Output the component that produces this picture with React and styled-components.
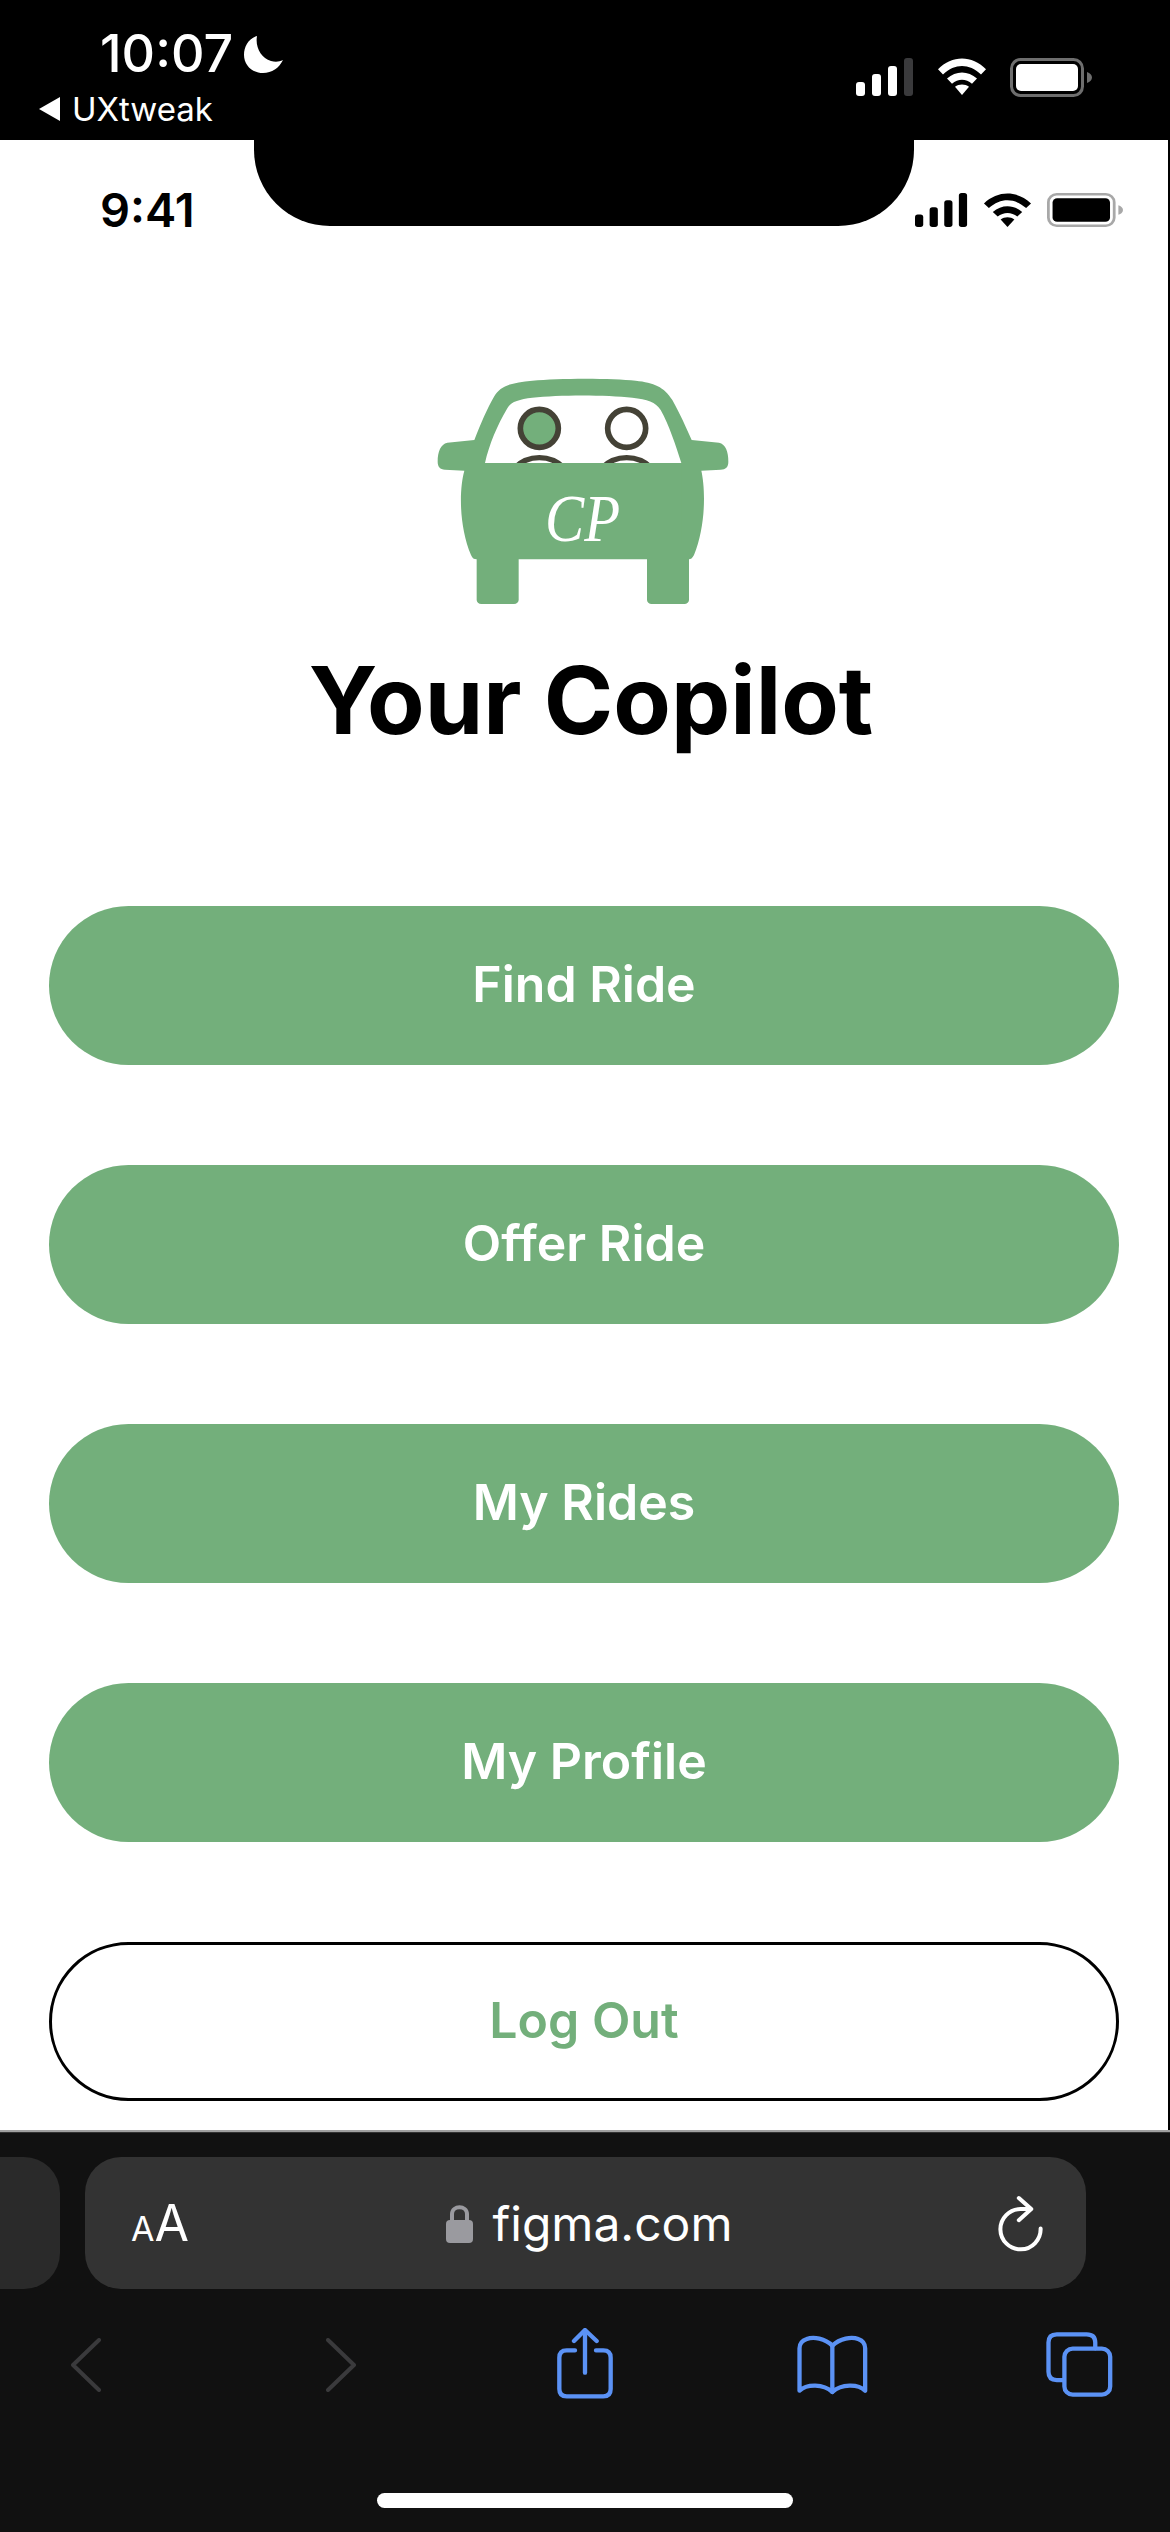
import React from 'react';
import styled, { createGlobalStyle } from 'styled-components';

const GlobalStyle = createGlobalStyle`
    html, body {
        margin: 0;
        padding: 0;
        background: #000;
    }
`;

const Page = styled.div`
    width: 1170px;
    height: 2532px;
    display: flex;
    flex-direction: column;
    overflow: hidden;
    font-family: Inter, "Liberation Sans", sans-serif;
`;

const TopBar = styled.div`
    height: 140px;
    flex: none;
    background: #000;
    color: #fff;
    display: flex;
    justify-content: space-between;
    box-sizing: border-box;
    padding: 28px 78px 0 38px;
`;

const TopLeft = styled.div`
    display: flex;
    flex-direction: column;
`;

const ClockRow = styled.div`
    display: flex;
    align-items: center;
    gap: 11px;
    padding-left: 62px;
    height: 52px;
    font-size: 52px;
    line-height: 52px;
    font-weight: 500;
`;

const BackLink = styled.div`
    display: flex;
    align-items: center;
    gap: 10px;
    height: 40px;
    margin-top: 9px;
    font-size: 33px;
    font-weight: 400;
`;

const TopIcons = styled.div`
    display: flex;
    align-items: flex-start;
    gap: 23px;
    padding-top: 30px;
`;

const Screen = styled.div`
    position: relative;
    flex: none;
    width: 1168px;
    height: 1990px;
    background: #fff;
    display: flex;
    flex-direction: column;
    align-items: center;
`;

const Notch = styled.div`
    position: absolute;
    top: 0;
    left: 254px;
    width: 660px;
    height: 86px;
    background: #000;
    border-radius: 0 0 76px 76px;
`;

const PhoneStatus = styled.div`
    align-self: stretch;
    height: 100px;
    box-sizing: border-box;
    padding: 53px 45px 0 100px;
    display: flex;
    justify-content: space-between;
    align-items: flex-start;
    color: #000;
`;

const PhoneClock = styled.div`
    font-size: 47px;
    line-height: 52px;
    font-weight: 600;
    margin-top: -9px;
`;

const PhoneIcons = styled.div`
    display: flex;
    gap: 15px;
`;

const LogoWrap = styled.div`
    margin-top: 110px;
    height: 270px;
    width: 370px;
`;

const Title = styled.h1`
    margin: 24px 0 0 14px;
    font-size: 94px;
    line-height: 112px;
    font-weight: 700;
    color: #000;
`;

const Buttons = styled.div`
    margin-top: 150px;
    display: flex;
    flex-direction: column;
    gap: 100px;
`;

const MenuButton = styled.button`
    width: 1070px;
    height: 159px;
    box-sizing: border-box;
    margin: 0;
    padding: 0 0 3px;
    border-radius: 80px;
    border: ${props => (props.$outline ? '3px solid #000' : 'none')};
    background: ${props => (props.$outline ? '#fff' : '#73af7b')};
    color: ${props => (props.$outline ? '#73af7b' : '#fff')};
    font-family: inherit;
    font-size: 50px;
    font-weight: 600;
`;

const Chrome = styled.div`
    flex: 1;
    background: #111;
    border-top: 2px solid #a0a0a0;
    box-shadow: inset 0 1px 0 #333;
    box-sizing: border-box;
    padding-top: 25px;
    display: flex;
    flex-direction: column;
`;

const UrlRow = styled.div`
    display: flex;
    gap: 25px;
    height: 132px;
`;

const PrevTab = styled.div`
    width: 60px;
    background: #2a2a2a;
    border-radius: 0 36px 36px 0;
`;

const UrlBar = styled.div`
    width: 1001px;
    background: #333;
    border-radius: 36px;
    display: flex;
    align-items: center;
    justify-content: space-between;
    box-sizing: border-box;
    padding: 0 42px 0 46px;
    color: #fff;
`;

const TextSize = styled.div`
    font-size: 34px;
    font-weight: 400;

    span {
        font-size: 50px;
    }
`;

const Address = styled.div`
    display: flex;
    align-items: center;
    gap: 20px;
    margin-right: 8px;
    font-size: 48px;
    font-weight: 400;
`;

const Toolbar = styled.div`
    display: grid;
    grid-template-columns: 255px 229px 240px 250px auto;
    align-items: center;
    height: 72px;
    margin-top: 39px;
    padding-left: 71px;
`;

const HomeBar = styled.div`
    margin: 93px auto 0;
    width: 416px;
    height: 15px;
    border-radius: 8px;
    background: #fff;
`;

const Signal = ({ color, dim, width, height }) => (
    <svg width={width} height={height} viewBox="0 0 58 38" preserveAspectRatio="none">
        <rect x="0" y="24" width="9" height="14" rx="3" fill={color} />
        <rect x="16" y="16" width="9" height="22" rx="3" fill={color} />
        <rect x="32" y="8" width="9" height="30" rx="3" fill={color} />
        <rect x="48" y="0" width="9" height="38" rx="3" fill={dim || color} />
    </svg>
);

const Wifi = ({ color, width, height }) => (
    <svg width={width} height={height} viewBox="0 0 50 36" preserveAspectRatio="none">
        <path d="M1 11 C15 -3 35 -3 49 11 L44 16 C32 5 18 5 6 16 Z" fill={color} />
        <path d="M10 20 C19 12 31 12 40 20 L35 25 C29 20 21 20 15 25 Z" fill={color} />
        <path d="M18 28 C22 25 28 25 32 28 L25 36 Z" fill={color} />
    </svg>
);

const Battery = ({ border, color, width, height }) => (
    <svg width={width} height={height} viewBox="0 0 82 39" preserveAspectRatio="none">
        <rect x="1.5" y="1.5" width="71" height="36" rx="9" fill="none" stroke={border} strokeWidth="3" />
        <rect x="6" y="6" width="62" height="27" rx="5" fill={color} />
        <path d="M77 14 C80 15 82 17 82 19.5 C82 22 80 24 77 25 Z" fill={border} />
    </svg>
);

const CarLogo = () => (
    <svg width="370" height="270" viewBox="0 0 1110 810">
        <path
            fill="#73af7b"
            d="M226 270 C245 220 265 175 285 140 C305 105 340 98 400 92 C480 84 640 84 710 92 C765 98 795 110 820 150 C845 195 860 230 878 270 L960 278 C980 282 988 305 988 335 C988 352 980 358 965 359 L907 362 C920 420 920 530 885 615 C880 625 875 628 870 628 L870 750 C870 757 864 762 856 762 L758 762 C750 762 744 757 744 750 L744 628 L359 628 L359 750 C359 757 353 762 345 762 L247 762 C239 762 233 757 233 750 L233 628 C225 628 220 625 216 615 C180 530 180 420 196 362 L138 359 C123 358 116 350 116 335 C116 305 125 282 145 278 Z"
        />
        <path
            fill="#fff"
            d="M258 339 C270 285 295 225 325 175 C335 155 360 148 400 143 C480 134 620 134 700 143 C745 148 770 155 785 180 C810 225 830 285 847 339 Z"
        />
        <circle cx="421" cy="235" r="57" fill="#73af7b" stroke="#444236" strokeWidth="17" />
        <circle cx="683" cy="235" r="57" fill="#fff" stroke="#444236" strokeWidth="17" />
        <circle cx="421" cy="429" r="106" fill="#fff" stroke="#444236" strokeWidth="16" />
        <circle cx="683" cy="429" r="106" fill="#fff" stroke="#444236" strokeWidth="16" />
        <rect x="258" y="339" width="590" height="240" fill="#73af7b" />
        <text
            x="438"
            y="574"
            fill="#fff"
            fontFamily="'Liberation Serif', serif"
            fontStyle="italic"
            fontSize="205"
            textLength="225"
            lengthAdjust="spacingAndGlyphs"
        >
            CP
        </text>
    </svg>
);

const Lock = () => (
    <svg width="27" height="39" viewBox="0 0 27 39">
        <path d="M6 19 V10 C6 1 21 1 21 10 V19" fill="none" stroke="#9a9a9f" strokeWidth="4" />
        <rect x="0" y="16" width="27" height="23" rx="4" fill="#9a9a9f" />
    </svg>
);

const Reload = () => (
    <svg width="47" height="57" viewBox="80 38 140 170" fill="none" stroke="#fff" strokeWidth="12" strokeLinecap="round" strokeLinejoin="round">
        <path d="M178 80 H150 A60 60 0 1 0 210 138" />
        <path d="M145 47 L182 80 L145 113" />
    </svg>
);

const Chevron = ({ flip }) => (
    <svg width="30" height="54" viewBox="0 0 30 54">
        <path
            d={flip ? 'M2 2 L28 27 L2 52' : 'M28 2 L2 27 L28 52'}
            fill="none"
            stroke="#3a3a3c"
            strokeWidth="4"
            strokeLinecap="round"
            strokeLinejoin="round"
        />
    </svg>
);

const Share = () => (
    <svg width="60" height="74" viewBox="45 34 180 222" fill="none" stroke="#5b92f5" strokeWidth="13" strokeLinecap="round" strokeLinejoin="round">
        <path d="M105 101 H80 Q58 101 58 123 V217 Q58 239 80 239 H190 Q212 239 212 217 V123 Q212 101 190 101 H168" />
        <path d="M135 168 V42" />
        <path d="M102 73 L135 40 L170 73" />
    </svg>
);

const Book = () => (
    <svg width="75" height="62" viewBox="765 55 225 187" fill="none" stroke="#5b92f5" strokeWidth="13" strokeLinecap="round" strokeLinejoin="round">
        <path d="M877 90 C855 68 820 62 800 70 C785 75 778 85 778 98 V226 C800 205 850 205 877 230 C904 205 955 205 976 226 V98 C976 85 969 75 955 70 C935 62 900 68 877 90 Z" />
        <path d="M877 90 V230" />
    </svg>
);

const Tabs = () => (
    <svg width="70" height="68" viewBox="45 30 210 205" fill="none" stroke="#5b92f5" strokeWidth="13" strokeLinecap="round" strokeLinejoin="round">
        <path d="M100 178 H80 Q55 178 55 153 V65 Q55 40 80 40 H170 Q196 40 196 65 V82" />
        <rect x="103" y="83" width="138" height="139" rx="25" />
    </svg>
);

const Moon = () => (
    <svg width="39" height="37" viewBox="0 0 39 37">
        <path d="M13 0 C4 3 0 11 0 19 C0 29 8 37 19 37 C28 37 35 32 39 24 C35 26 31 26 27 25 C17 22 11 11 13 0 Z" fill="#fff" />
    </svg>
);

const BackArrow = () => (
    <svg width="24" height="26" viewBox="0 0 24 26">
        <path d="M22 1 V25 L1 13 Z" fill="#fff" />
    </svg>
);

const menu = ['Find Ride', 'Offer Ride', 'My Rides', 'My Profile'];

const App = () => {
    return (
        <Page>
            <GlobalStyle />
            <TopBar>
                <TopLeft>
                    <ClockRow>10:07 <Moon /></ClockRow>
                    <BackLink><BackArrow />UXtweak</BackLink>
                </TopLeft>
                <TopIcons>
                    <Signal color="#fff" dim="#3a3a3c" width={58} height={38} />
                    <Wifi color="#fff" width={50} height={37} />
                    <Battery border="#6e6e6e" color="#fff" width={82} height={39} />
                </TopIcons>
            </TopBar>
            <Screen>
                <Notch />
                <PhoneStatus>
                    <PhoneClock>9:41</PhoneClock>
                    <PhoneIcons>
                        <Signal color="#000" width={53} height={34} />
                        <Wifi color="#000" width={49} height={34} />
                        <Battery border="#a8a8a8" color="#000" width={76} height={34} />
                    </PhoneIcons>
                </PhoneStatus>
                <LogoWrap><CarLogo /></LogoWrap>
                <Title>Your Copilot</Title>
                <Buttons>
                    {menu.map(label => (
                        <MenuButton key={label}>{label}</MenuButton>
                    ))}
                    <MenuButton $outline>Log Out</MenuButton>
                </Buttons>
            </Screen>
            <Chrome>
                <UrlRow>
                    <PrevTab />
                    <UrlBar>
                        <TextSize>A<span>A</span></TextSize>
                        <Address><Lock />figma.com</Address>
                        <Reload />
                    </UrlBar>
                </UrlRow>
                <Toolbar>
                    <Chevron />
                    <Chevron flip />
                    <Share />
                    <Book />
                    <Tabs />
                </Toolbar>
                <HomeBar />
            </Chrome>
        </Page>
    );
};

export default App;
